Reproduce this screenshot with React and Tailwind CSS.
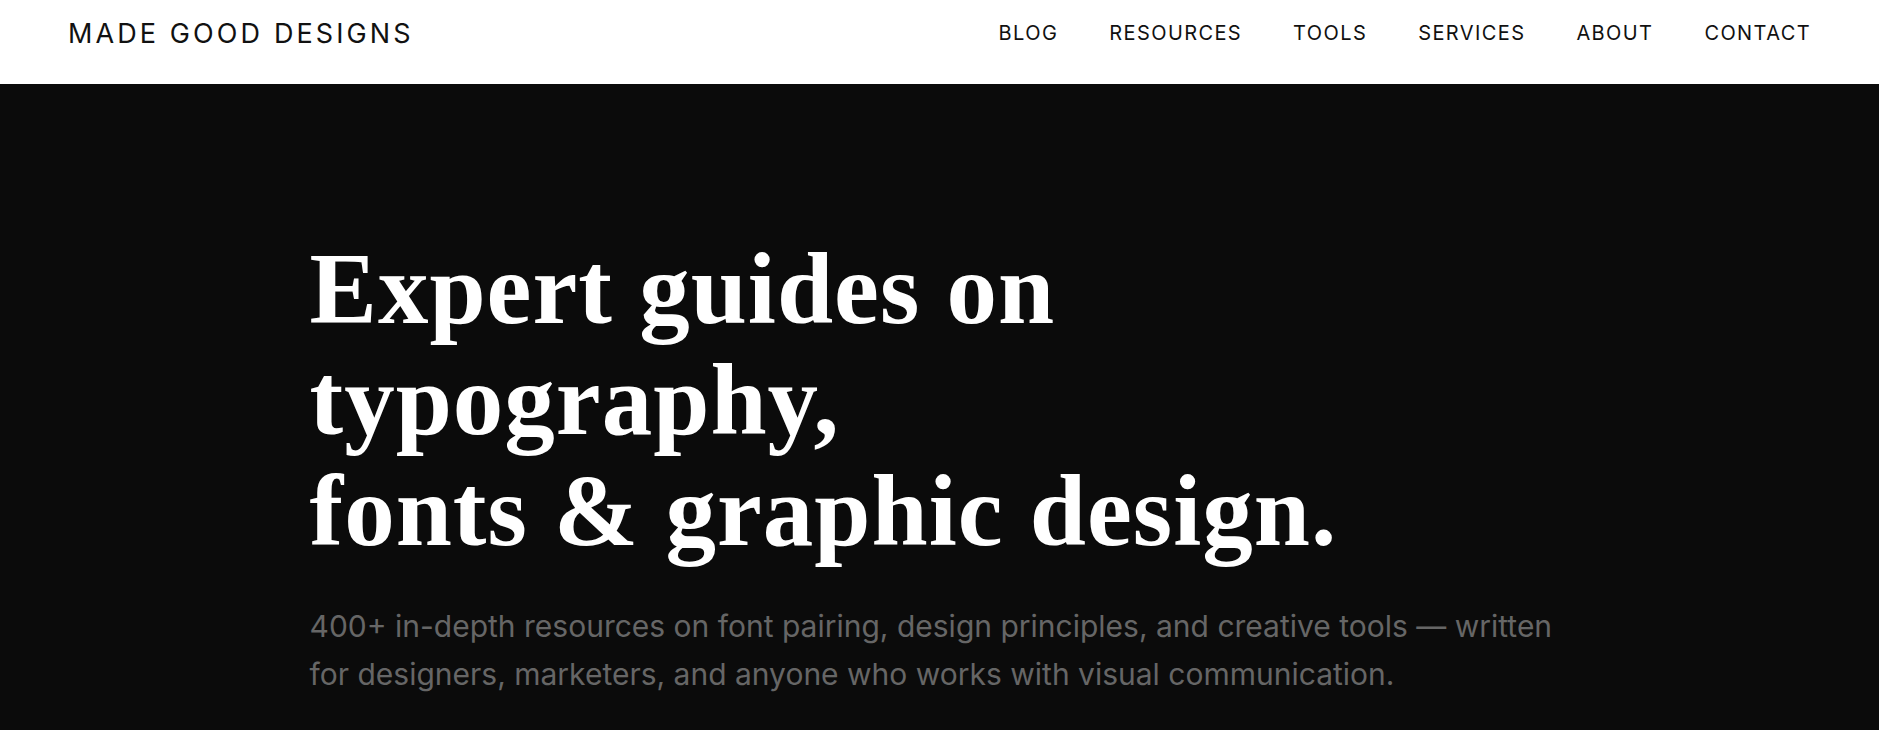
const NAV = ["BLOG", "RESOURCES", "TOOLS", "SERVICES", "ABOUT", "CONTACT"];

function Header() {
  return (
    <header className="bg-white h-[84px] px-[68px] pb-[18px] flex items-center justify-between font-['Inter',sans-serif] text-[#111]">
      <a href="#" className="text-[27px] tracking-[0.115em] leading-none">MADE GOOD DESIGNS</a>
      <nav className="flex items-center gap-[51px]">
        {NAV.map(item => (
          <a key={item} href="#" className="text-[20px] tracking-[0.07em] leading-none">{item}</a>
        ))}
      </nav>
    </header>
  );
}

export default function App() {
  return (
    <div className="min-h-screen bg-[#0b0b0b]">
      <Header />
      <section className="max-w-[1260px] mx-auto pt-[150px] pb-[120px]">
        <h1 className="font-['Liberation_Serif',serif] font-bold text-white text-[101px] leading-[111px] tracking-[0.01em]">
          Expert guides on<br />
          typography,<br />
          fonts &amp; graphic design.
        </h1>
        <p className="mt-[35px] font-['Inter',sans-serif] text-[30px] leading-[48px] text-[#666]">
          400+ in-depth resources on font pairing, design principles, and creative tools — written for designers, marketers, and anyone who works with visual communication.
        </p>
      </section>
    </div>
  );
}
